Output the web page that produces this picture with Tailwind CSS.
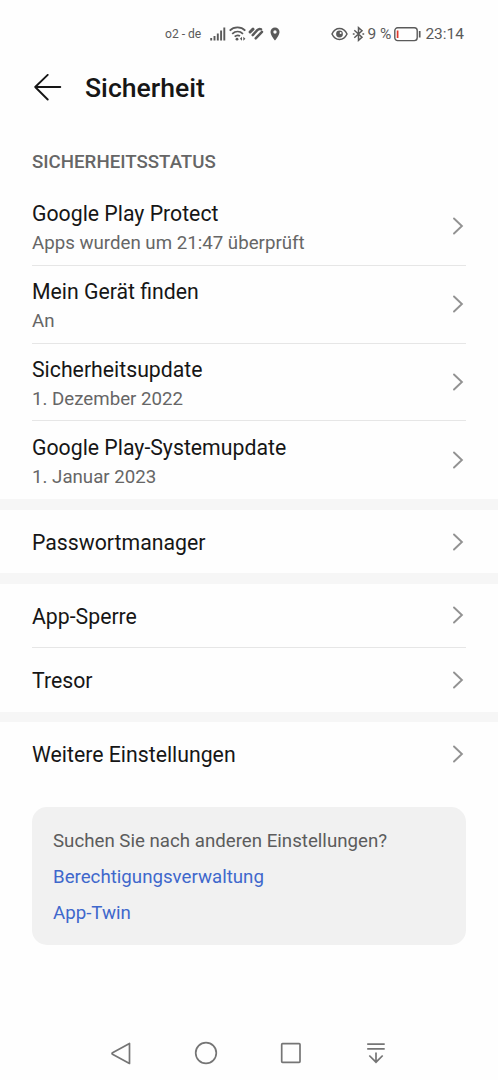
<!DOCTYPE html>
<html lang="de">
<head>
  <meta charset="UTF-8" />
  <meta name="viewport" content="width=device-width, initial-scale=1.0" />
  <title>Sicherheit</title>
  <script src="https://cdn.jsdelivr.net/npm/@tailwindcss/browser@4"></script>
</head>
<body class="bg-[#fefefe] h-[1080px] flex flex-col overflow-hidden font-['Roboto',sans-serif] text-[#161616]">
  <!-- Status Bar -->
  <div class="h-[60px] pt-[8px] pl-[165px] pr-[34px] flex items-center justify-between text-[#5a5a5a] whitespace-nowrap shrink-0">
    <div class="flex items-center">
      <span class="text-[12.1px] w-[45px] pt-px">o2 - de</span>
      <svg class="w-4 h-4" viewBox="0 0 16 16" stroke="currentColor" stroke-width="1.9">
        <path d="M1.2 12v2.5M4.5 10v4.5M7.8 7.5v7M11.1 4.5v10M14.3 1.5v13" />
      </svg>
      <svg class="w-[18px] h-4 ml-[3px]" viewBox="0 0 18 16" fill="none" stroke="currentColor" stroke-width="1.8">
        <path d="M.7 4.600C5 .4 12 .4 16.300 4.600M3.200 7.800C6.500 4.800 10.800 4.800 14 7.800M5.700 10.700C7.300 9.200 9.300 9 11 10" />
        <circle cx="8" cy="13.200" r="1.400" fill="currentColor" stroke="none" />
        <path d="M13 10.700v4L10.900 12.700ZM14.300 10.700v4l2.100-2Z" fill="currentColor" stroke="none" />
      </svg>
      <svg class="w-4 h-4 ml-px" viewBox="0 0 16 16" fill="none" stroke="currentColor" stroke-width="2.500" stroke-linecap="round" stroke-linejoin="round">
        <path d="M5 3.200 2.100 6" stroke-width="3" />
        <path d="M4.700 9.100 9.300 4.200Q11.200 2.200 13 3.300M7.700 12.300 14 5.800" />
      </svg>
      <svg class="w-[10px] h-[14px] ml-[6px]" viewBox="0 0 10 14" fill="currentColor">
        <path fill-rule="evenodd" d="M5 .5A4.500 4.500 0 0 0 .5 5C.5 8.300 5 13.500 5 13.500S9.500 8.300 9.500 5A4.500 4.500 0 0 0 5 .5ZM5 3.300a1.700 1.700 0 1 1 0 3.400 1.700 1.700 0 0 1 0-3.400Z" />
      </svg>
    </div>
    <div class="flex items-center">
      <svg class="w-[17px] h-[14px] mr-px" viewBox="0 0 17 14" fill="none" stroke="currentColor" stroke-width="1.500">
        <path d="M1 7C4.500-.3 12.500-.3 16 7 12.500 14.300 4.500 14.300 1 7Z" />
        <circle cx="8.500" cy="7" r="3.400" fill="currentColor" stroke="none" />
        <circle cx="9.600" cy="5.900" r="1" fill="#fefefe" stroke="none" />
      </svg>
      <svg class="w-[13px] h-4 ml-[3px]" viewBox="0 0 13 16" fill="none" stroke="currentColor" stroke-width="1.500">
        <path d="M2.300 4.300 10 11.200 6.500 14.300V1.700L10 4.800 2.300 11.700" />
        <path d="M.8 8h1.800M10.400 8h1.800" stroke-width="1.700" />
      </svg>
      <span class="text-[15.500px] ml-[2px] w-[27px] pt-[2px]">9 %</span>
      <svg class="w-[27px] h-4" viewBox="0 0 27 16" fill="none" stroke="currentColor" stroke-width="1.400">
        <rect x=".8" y="1.800" width="22.400" height="12.800" rx="2.800" />
        <path d="M25.700 5v6.500" stroke-width="1.700" />
        <path d="M3.600 4.500v7.500" stroke="#e0392d" stroke-width="1.700" />
      </svg>
      <span class="text-[15.500px] ml-1 pt-[2px]">23:14</span>
    </div>
  </div>

  <!-- Header -->
  <header class="h-[56px] pl-[34px] flex items-center shrink-0">
    <svg class="w-7 h-7" viewBox="0 0 28 28" fill="none" stroke="currentColor" stroke-width="1.900" stroke-linecap="round" stroke-linejoin="round">
      <path d="M26.300 13H1.200M13.700 .9 1.200 13 13.700 25.500" />
    </svg>
    <h1 class="ml-[23px] text-[26.600px] font-medium">Sicherheit</h1>
  </header>

  <h2 class="h-[72px] pt-[32px] pl-8 text-[18.700px] leading-[28px] font-medium text-[#666] shrink-0">SICHERHEITSSTATUS</h2>

  <!-- Settings list, filled below -->
  <main id="settings" class="shrink-0"></main>

  <!-- Suggestions -->
  <section class="mt-[21px] mx-8 h-[138px] shrink-0 rounded-[15px] bg-[#f1f1f1] pt-4 pl-[21px] text-[18.700px] leading-[36px] text-[#5c5c5c]">
    <p>Suchen Sie nach anderen Einstellungen?</p>
    <a class="block text-[#3f68cc]">Berechtigungsverwaltung</a>
    <a class="block text-[#3f68cc]">App-Twin</a>
  </section>

  <!-- Navigation -->
  <nav class="mt-auto h-[54px] pl-[109px] pr-[110px] flex justify-between items-center text-[#757575] shrink-0">
    <svg class="w-6 h-6" viewBox="0 0 24 24" fill="none" stroke="currentColor" stroke-width="1.700" stroke-linejoin="round">
      <path d="M20.500 2.500v20L3.500 13.300q-1-.8 0-1.600Z" />
    </svg>
    <svg class="w-6 h-6" viewBox="0 0 24 24" fill="none" stroke="currentColor" stroke-width="1.700">
      <circle cx="12" cy="12" r="10.300" />
    </svg>
    <svg class="w-6 h-6" viewBox="0 0 24 24" fill="none" stroke="currentColor" stroke-width="1.700">
      <rect x="2.700" y="2.700" width="18.300" height="18.600" rx=".8" />
    </svg>
    <svg class="w-6 h-6" viewBox="0 0 24 24" fill="none" stroke="currentColor" stroke-width="1.700">
      <path d="M3.200 3.200h17.500M3.200 7.800h17.500M12 11.500v9.500M5.300 14.500l6.700 6.700 6.700-6.700" />
    </svg>
  </nav>

<script>
const groups = [
  [
    {title:'Google Play Protect', sub:'Apps wurden um 21:47 überprüft'},
    {title:'Mein Gerät finden', sub:'An'},
    {title:'Sicherheitsupdate', sub:'1. Dezember 2022'},
    {title:'Google Play-Systemupdate', sub:'1. Januar 2023'}
  ],
  [{title:'Passwortmanager'}],
  [{title:'App-Sperre'},{title:'Tresor'}],
  [{title:'Weitere Einstellungen'}]
];

const chevron = `
  <svg class="w-3 h-[18px] mr-[2px] text-[#929292]" viewBox="0 0 12 18" fill="none" stroke="currentColor" stroke-width="1.900" stroke-linecap="round">
    <path d="M2 1.500 9.900 9 2 16.500" />
  </svg>`;

function row(item, last){
  const height = item.sub ? 'h-[77.800px]' : 'h-[63.800px]';
  const border = last ? '' : 'border-b border-[#e6e6e6]';
  const offset = item.sub ? 'pt-[4px]' : 'pt-[3px]';
  const sub = item.sub ? `<p class="text-[18.700px] leading-[28px] text-[#666]">${item.sub}</p>` : '';
  return `
    <div class="mx-8 flex items-center justify-between ${height} ${border}">
      <div class="${offset}">
        <p class="text-[21.250px] leading-[30px]">${item.title}</p>
        ${sub}
      </div>
      ${chevron}
    </div>`;
}

document.getElementById('settings').innerHTML = groups
  .map(g => g.map((item, i) => row(item, i === g.length - 1)).join(''))
  .join('<div class="h-[10.500px] bg-[#f6f6f6]"></div>');
</script>
</body>
</html>
